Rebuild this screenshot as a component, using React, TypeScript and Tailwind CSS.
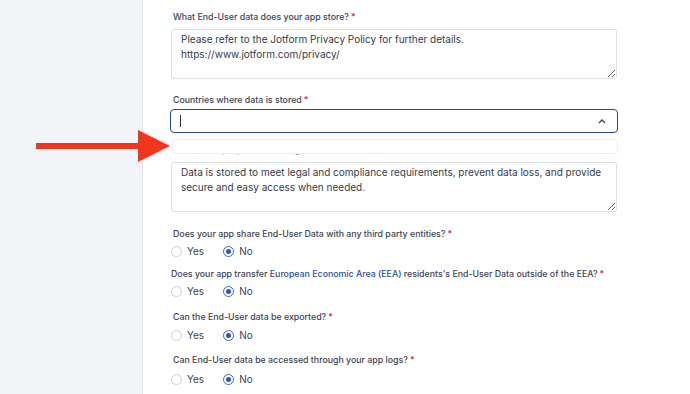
import React from 'react'

function Label({ children, className = '' }: { children: React.ReactNode; className?: string }) {
  return (
    <div className={`h-[12px] pl-[2px] text-[8.8px] leading-[12px] font-medium text-[#3d4452] ${className}`}>
      {children}
      <span className="ml-[2px] text-[#c4283c]">*</span>
    </div>
  )
}

function Radio({ checked }: { checked?: boolean }) {
  return checked ? (
    <span className="flex h-[11px] w-[11px] items-center justify-center rounded-full border-[1.5px] border-[#3f66c9] bg-white">
      <span className="h-[5px] w-[5px] rounded-full bg-[#2c54c0]" />
    </span>
  ) : (
    <span className="h-[11px] w-[11px] rounded-full border border-[#cdd0d6] bg-white" />
  )
}

function YesNo({ className = '' }: { className?: string }) {
  return (
    <div className={`flex h-[14px] items-center text-[10px] text-[#3d4452] ${className}`}>
      <Radio />
      <span className="ml-[5px]">Yes</span>
      <span className="ml-[19px]"><Radio checked /></span>
      <span className="ml-[5px]">No</span>
    </div>
  )
}

function Area({ value, className = '' }: { value: string; className?: string }) {
  return (
    <textarea
      readOnly
      wrap="off"
      value={value}
      className={`block h-[50px] w-[446px] overflow-hidden rounded-[3px] border border-[#dcdfe4] bg-white px-[9px] pt-[2px] text-[10px] leading-[15px] text-[#353b47] outline-none ${className}`}
    />
  )
}

export default function App() {
  return (
    <div className="relative flex h-[394px] w-[690px] overflow-hidden bg-white font-['Inter',sans-serif]">
      <aside className="h-full w-[143px] shrink-0 border-r border-[#e1e3e8] bg-[#f3f4f7]" />

      <main className="relative pl-[28px] pt-[11px]">
        <Label>What End-User data does your app store?</Label>
        <Area
          className="mt-[6px]"
          value={'Please refer to the Jotform Privacy Policy for further details.\nhttps://www.jotform.com/privacy/'}
        />

        <Label className="mt-[15px]">Countries where data is stored</Label>
        <div className="mt-[3px] flex h-[24px] w-[448px] -ml-[1px] items-center justify-between rounded-[4px] border-[1.5px] border-[#2f4b86] bg-white px-[9px]">
          <span className="h-[12px] w-px bg-[#2a2f3a]" />
          <svg width="8" height="5" viewBox="0 0 8 5" className="mr-[2px]">
            <polyline points="1,4 4,1 7,4" fill="none" stroke="#3d4452" strokeWidth="1.3" />
          </svg>
        </div>

        <Label className="mt-[11px] text-[#a3a8b1]">What is the purpose of storing the data?</Label>
        <Area
          className="mt-[6px]"
          value={'Data is stored to meet legal and compliance requirements, prevent data loss, and provide\nsecure and easy access when needed.'}
        />

        {/* dropdown menu, open and empty */}
        <div className="absolute left-[29px] top-[139px] h-[15px] w-[446px] rounded-[4px] border border-[#eceef2] bg-white" />

        <Label className="mt-[16px]">Does your app share End-User Data with any third party entities?</Label>
        <YesNo className="mt-[4px]" />

        <Label className="mt-[10px] !pl-0">
          Does your app transfer <span className="text-[#2d4f9e]">European Economic Area (EEA)</span> residents's End-User Data outside of the EEA?
        </Label>
        <YesNo className="mt-[4px]" />

        <Label className="mt-[13px]">Can the End-User data be exported?</Label>
        <YesNo className="mt-[5px]" />

        <Label className="mt-[12px]">Can End-User data be accessed through your app logs?</Label>
        <YesNo className="mt-[6px]" />
      </main>

      <svg width="134" height="32" viewBox="0 0 134 32" className="absolute left-[36px] top-[130px]">
        <rect x="0" y="13" width="103" height="6" fill="#f2361e" />
        <polygon points="102,0 134,16 102,32" fill="#f2361e" />
      </svg>
    </div>
  )
}
